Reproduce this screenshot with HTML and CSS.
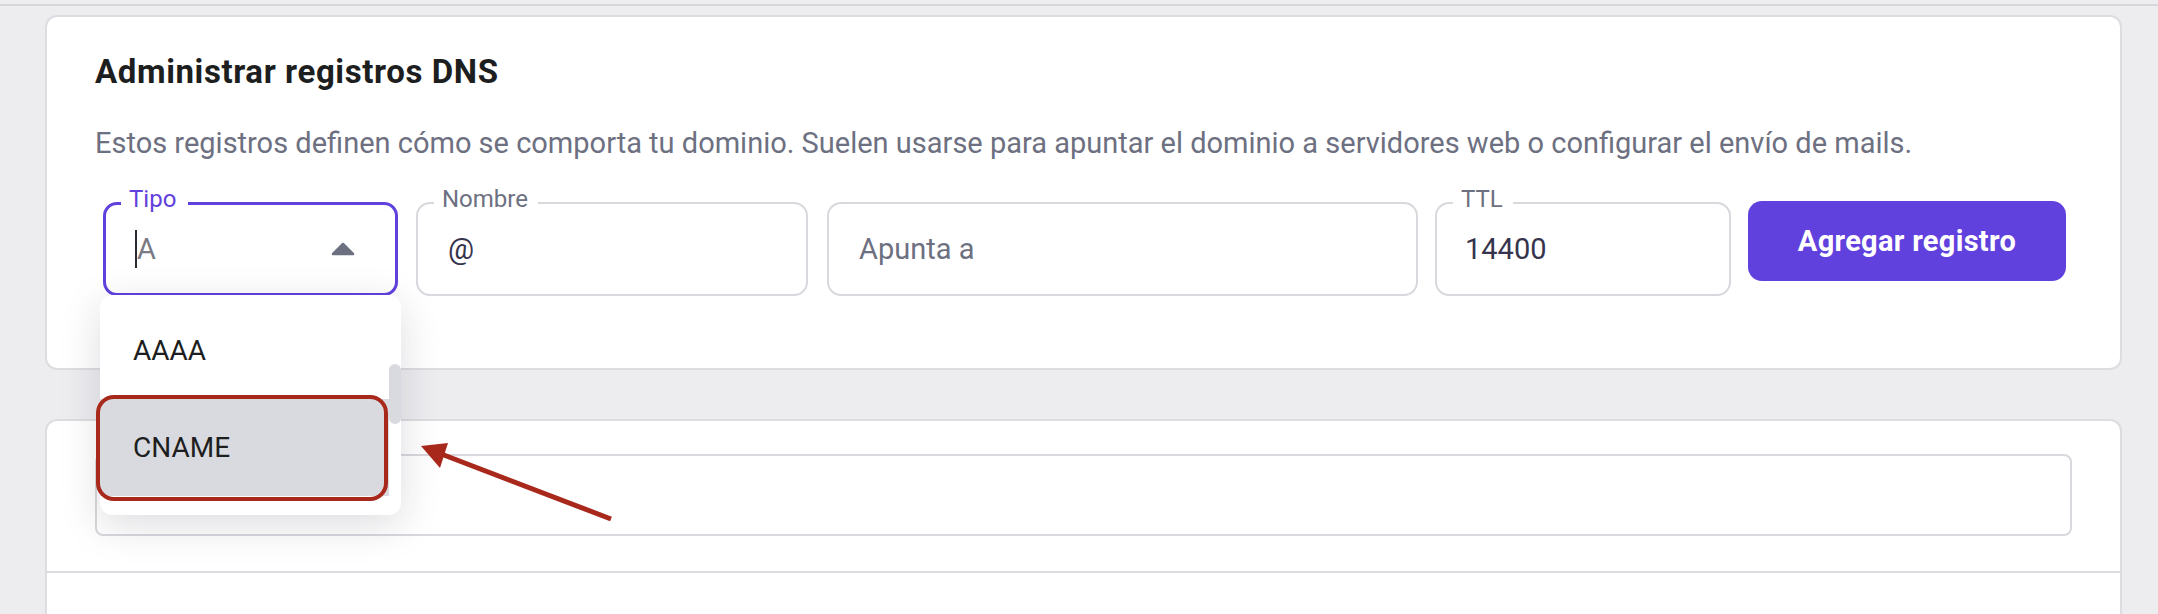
FILE: index.html
```html
<!DOCTYPE html>
<html lang="es">
<head>
<meta charset="utf-8">
<title>Administrar registros DNS</title>
<link rel="stylesheet" href="styles.css">
</head>
<body>
<div class="topline"></div>
<main class="page">
  <section class="card card-dns">
    <h2 class="title">Administrar registros DNS</h2>
    <p class="desc">Estos registros definen cómo se comporta tu dominio. Suelen usarse para apuntar el dominio a servidores web o configurar el envío de mails.</p>
    <div class="form-row">
      <div class="field field-type">
        <span class="field-label label-focus">Tipo</span>
        <span class="caret"></span><span class="value value-muted">A</span>
        <svg class="chevron" width="24" height="14" viewBox="0 0 24 14"><path d="M2 12 L12 2 L22 12 Z" fill="#6d7081" stroke="#6d7081" stroke-width="2.5" stroke-linejoin="round"/></svg>
        <div class="dropdown">
          <div class="option">AAAA</div>
          <div class="option option-active">CNAME</div>
          <div class="scroll-thumb"></div>
        </div>
        <div class="highlight-ring"></div>
      </div>
      <div class="field field-name">
        <span class="field-label">Nombre</span>
        <span class="value">@</span>
      </div>
      <div class="field field-target">
        <span class="value value-placeholder">Apunta a</span>
      </div>
      <div class="field field-ttl">
        <span class="field-label">TTL</span>
        <span class="value">14400</span>
      </div>
      <button class="btn-primary">Agregar registro</button>
    </div>
  </section>
  <section class="card card-list">
    <div class="search-box"></div>
    <div class="divider"></div>
  </section>
</main>
<svg class="annotation-arrow" width="2158" height="614" viewBox="0 0 2158 614">
  <line x1="611" y1="519" x2="436" y2="452" stroke="#a8291b" stroke-width="5"/>
  <polygon points="421,446 448,443 440,468" fill="#a8291b"/>
</svg>
</body>
</html>
```

FILE: styles.css
```css
html, body {
  margin: 0;
  padding: 0;
  overflow: hidden;
  height: 614px;
}
body {
  background: #ededf0;
  font-family: Roboto, "Liberation Sans", sans-serif;
  position: relative;
}
.topline {
  height: 4px;
  border-bottom: 2px solid #d7d7dc;
}
.page {
  padding: 9px 36px 0 45px;
}
.card {
  background: #ffffff;
  border: 2px solid #dcdce1;
  border-radius: 12px;
}
.card-dns {
  padding: 37px 48px 72px 48px;
  margin-bottom: 49px;
}
.title {
  margin: 0;
  font-size: 33px;
  line-height: 36px;
  font-weight: 700;
  letter-spacing: 0.6px;
  color: #1d1e20;
}
.desc {
  margin: 35px 0 0 0;
  font-size: 29px;
  line-height: 36px;
  color: #6d7081;
}
.form-row {
  margin-top: 41px;
  display: flex;
  align-items: flex-start;
}
.field {
  position: relative;
  box-sizing: border-box;
  height: 94px;
  border: 2px solid #d8d8dd;
  border-radius: 14px;
  display: flex;
  align-items: center;
  padding: 0 40px 0 30px;
  background: #fff;
}
.field-type {
  width: 295px;
  border: 3px solid #6141dd;
  padding-left: 29px;
  margin-left: 8px;
}
.field-name {
  width: 392px;
  margin-left: 18px;
}
.field-target {
  width: 591px;
  margin-left: 19px;
}
.field-ttl {
  width: 296px;
  margin-left: 17px;
  padding-left: 28px;
}
.field-label {
  position: absolute;
  top: -19px;
  left: 16px;
  padding: 0 10px 0 8px;
  background: #fff;
  font-size: 24px;
  line-height: 28px;
  color: #6d7081;
}
.label-focus {
  top: -20px;
  left: 15px;
  color: #6141dd;
  padding-right: 12px;
}
.value {
  font-size: 29px;
  line-height: 34px;
  color: #36344d;
}
.value-muted {
  color: #7a7a84;
}
.value-placeholder {
  color: #6d7081;
}
.caret {
  width: 2px;
  height: 38px;
  background: #2b2b33;
}
.chevron {
  margin-left: auto;
  display: block;
}
.btn-primary {
  width: 318px;
  height: 80px;
  margin-left: 17px;
  margin-top: -1px;
  border: none;
  border-radius: 14px;
  background: #6141dd;
  color: #ffffff;
  font-family: Roboto, "Liberation Sans", sans-serif;
  font-size: 29px;
  font-weight: 700;
  letter-spacing: 0.3px;
  padding: 0;
}
.dropdown {
  position: absolute;
  left: -6px;
  top: 90px;
  width: 301px;
  height: 220px;
  box-sizing: border-box;
  padding-top: 7px;
  background: #fff;
  border-radius: 12px;
  box-shadow: 0 10px 40px rgba(30, 30, 50, 0.15);
  overflow: hidden;
  z-index: 5;
}
.option {
  width: 289px;
  height: 97px;
  box-sizing: border-box;
  padding-left: 33px;
  display: flex;
  align-items: center;
  font-size: 28px;
  color: #1d1e20;
}
.option-active {
  background: #d9dae0;
}
.scroll-thumb {
  position: absolute;
  right: 0;
  top: 69px;
  width: 12px;
  height: 60px;
  border-radius: 6px;
  background: #d9dae0;
}
.highlight-ring {
  position: absolute;
  left: -10px;
  top: 190px;
  width: 292px;
  height: 106px;
  box-sizing: border-box;
  border: 4px solid #a8291b;
  border-radius: 18px;
  z-index: 6;
}
.card-list {
  padding: 33px 48px 0 48px;
  height: 400px;
  border-bottom: none;
  border-radius: 12px 12px 0 0;
}
.search-box {
  height: 82px;
  box-sizing: border-box;
  border: 2px solid #d8d8dd;
  border-radius: 8px;
}
.divider {
  margin: 35px -48px 0 -48px;
  height: 2px;
  background: #dcdce1;
}
.annotation-arrow {
  position: absolute;
  left: 0;
  top: 0;
  pointer-events: none;
  z-index: 10;
}
```
